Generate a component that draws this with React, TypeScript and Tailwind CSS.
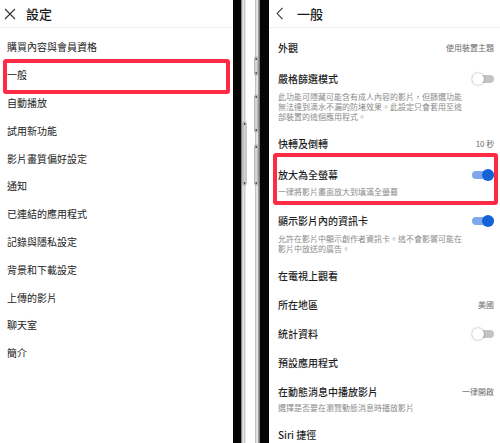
import React from 'react';

const font = { fontFamily: '"Noto Sans CJK TC", "Noto Sans", sans-serif' };

const leftItems = [
  '購買內容與會員資格',
  '一般',
  '自動播放',
  '試用新功能',
  '影片畫質偏好設定',
  '通知',
  '已連結的應用程式',
  '記錄與隱私設定',
  '背景和下載設定',
  '上傳的影片',
  '聊天室',
  '簡介',
];

function Toggle({ on }: { on: boolean }) {
  return (
    <div className="relative flex h-[12px] w-[22px] shrink-0 items-center">
      <div className={`h-[8px] w-full rounded-full ${on ? 'bg-[#7fa8ec]' : 'bg-[#c4c4c4]'}`} />
      <div
        className={`absolute top-0 h-[12px] w-[12px] rounded-full ${
          on ? 'right-0 bg-[#1463d6]' : 'left-0 bg-white shadow-[0_0_2px_rgba(0,0,0,0.45)]'
        }`}
      />
    </div>
  );
}

// small text is drawn at 10px and scaled down to 8px
function Row({
  title,
  value,
  toggle,
  desc,
  pt,
  descGap = 'mt-[5px]',
  boxed,
}: {
  title: string;
  value?: string;
  toggle?: boolean;
  desc?: string[];
  pt: string;
  descGap?: string;
  boxed?: boolean;
}) {
  return (
    <div className={`relative min-w-0 ${pt}`}>
      {boxed && (
        <div className="absolute -left-[5px] -right-[4px] top-[2px] -bottom-[8px] rounded-[3px] border-[4px] border-[#ff2a44]" />
      )}
      <div className="flex h-[14px] items-center justify-between">
        <span className="text-[10px] font-medium leading-[14px] text-[#1f1f1f]">{title}</span>
        {value && (
          <span className="inline-block origin-right scale-[0.8] whitespace-nowrap text-[10px] leading-[14px] text-[#6b6b6b]">
            {value}
          </span>
        )}
        {toggle !== undefined && <Toggle on={toggle} />}
      </div>
      {desc && (
        <div className={`${descGap} w-0`} style={{ height: desc.length * 10 }}>
          <div className="w-max origin-top-left scale-[0.8]">
            {desc.map((d) => (
              <div key={d} className="whitespace-nowrap text-[10px] leading-[12.5px] text-[#8a8a8a]">
                {d}
              </div>
            ))}
          </div>
        </div>
      )}
    </div>
  );
}

function PhoneEdges() {
  return (
    <svg width="37" height="443" viewBox="0 0 37 443" className="shrink-0">
      <rect x="0" y="0" width="37" height="443" fill="#ffffff" />
      <rect x="1" y="0" width="8.5" height="443" fill="#050505" />
      <rect x="9.5" y="0" width="1" height="443" fill="#8c8c8c" />
      <rect x="10.5" y="0" width="2" height="443" fill="#e2e2e2" />
      <rect x="12.5" y="0" width="0.8" height="443" fill="#a8a8a8" />
      <rect x="11" y="122" width="3.2" height="63" rx="1" fill="#d6d6d6" stroke="#8a8a8a" strokeWidth="0.6" />
      <circle cx="12.6" cy="124" r="0.9" fill="#444" />
      <circle cx="12.6" cy="183" r="0.9" fill="#444" />
      <rect x="23" y="0" width="0.8" height="443" fill="#a8a8a8" />
      <rect x="23.8" y="0" width="2.4" height="443" fill="#e2e2e2" />
      <rect x="26.2" y="0" width="1" height="443" fill="#8c8c8c" />
      <rect x="22.6" y="57" width="3.2" height="18" rx="1" fill="#d6d6d6" stroke="#8a8a8a" strokeWidth="0.6" />
      <circle cx="24.2" cy="59" r="0.9" fill="#444" />
      <circle cx="24.2" cy="73" r="0.9" fill="#444" />
      <rect x="22.6" y="95" width="3.2" height="37" rx="1" fill="#d6d6d6" stroke="#8a8a8a" strokeWidth="0.6" />
      <circle cx="24.2" cy="97" r="0.9" fill="#444" />
      <circle cx="24.2" cy="130" r="0.9" fill="#444" />
      <rect x="22.6" y="145" width="3.2" height="40" rx="1" fill="#d6d6d6" stroke="#8a8a8a" strokeWidth="0.6" />
      <circle cx="24.2" cy="147" r="0.9" fill="#444" />
      <circle cx="24.2" cy="183" r="0.9" fill="#444" />
      <rect x="27.5" y="0" width="9.5" height="443" fill="#050505" />
    </svg>
  );
}

export default function App() {
  return (
    <div className="flex h-[443px] w-[500px] overflow-hidden bg-white" style={font}>
      {/* left: settings */}
      <div className="flex w-[232px] shrink-0 flex-col">
        <div className="flex h-[28px] items-center border-b border-[#ececec]">
          <svg width="12" height="12" viewBox="0 0 12 12" className="ml-[4px]">
            <path d="M1 1 L11 11 M11 1 L1 11" stroke="#333" strokeWidth="1.1" />
          </svg>
          <span className="ml-[10px] text-[13px] font-medium text-[#1a1a1a]">設定</span>
        </div>
        <div className="pt-[5px]">
          {leftItems.map((item) => (
            <div key={item} className="relative flex h-[27.8px] items-center pl-[7px]">
              {item === '一般' && (
                <div className="absolute left-[3px] right-[2px] -top-[2px] -bottom-[5px] rounded-[3px] border-[4px] border-[#ff2a44]" />
              )}
              <span className="text-[10px] text-[#222]">{item}</span>
            </div>
          ))}
        </div>
      </div>

      <PhoneEdges />

      {/* right: general */}
      <div className="flex w-[231px] min-w-0 shrink-0 flex-col">
        <div className="flex h-[28px] items-center border-b border-[#ececec]">
          <svg width="8" height="13" viewBox="0 0 8 13" className="ml-[7px]">
            <path d="M6.5 0.8 L1.2 6.5 L6.5 12.2" fill="none" stroke="#333" strokeWidth="1.1" />
          </svg>
          <span className="ml-[13px] text-[13px] font-medium text-[#1a1a1a]">一般</span>
        </div>
        <div className="flex flex-col pl-[9px] pr-[6px]">
          <Row pt="pt-[13px]" title="外觀" value="使用裝置主題" />
          <Row
            pt="pt-[17px]"
            title="嚴格篩選模式"
            toggle={false}
            descGap="mt-[6px]"
            desc={[
              '此功能可隱藏可能含有成人內容的影片，但篩選功能',
              '無法達到滴水不漏的防堵效果。此設定只會套用至這',
              '部裝置的這個應用程式。',
            ]}
          />
          <Row pt="pt-[15px]" title="快轉及倒轉" value="10 秒" />
          <Row
            pt="pt-[17px]"
            title="放大為全螢幕"
            toggle={true}
            desc={['一律將影片畫面放大到填滿全螢幕']}
            boxed
          />
          <Row
            pt="pt-[17px]"
            title="顯示影片內的資訊卡"
            toggle={true}
            descGap="mt-[6px]"
            desc={['允許在影片中顯示創作者資訊卡。這不會影響可能在', '影片中放送的廣告。']}
          />
          <Row pt="pt-[15px]" title="在電視上觀看" />
          <Row pt="pt-[15px]" title="所在地區" value="美國" />
          <Row pt="pt-[15px]" title="統計資料" toggle={false} />
          <Row pt="pt-[15px]" title="預設應用程式" />
          <Row
            pt="pt-[15px]"
            title="在動態消息中播放影片"
            value="一律開啟"
            descGap="mt-[4px]"
            desc={['選擇是否要在瀏覽動態消息時播放影片']}
          />
          <Row pt="pt-[15px]" title="Siri 捷徑" />
        </div>
      </div>
    </div>
  );
}
